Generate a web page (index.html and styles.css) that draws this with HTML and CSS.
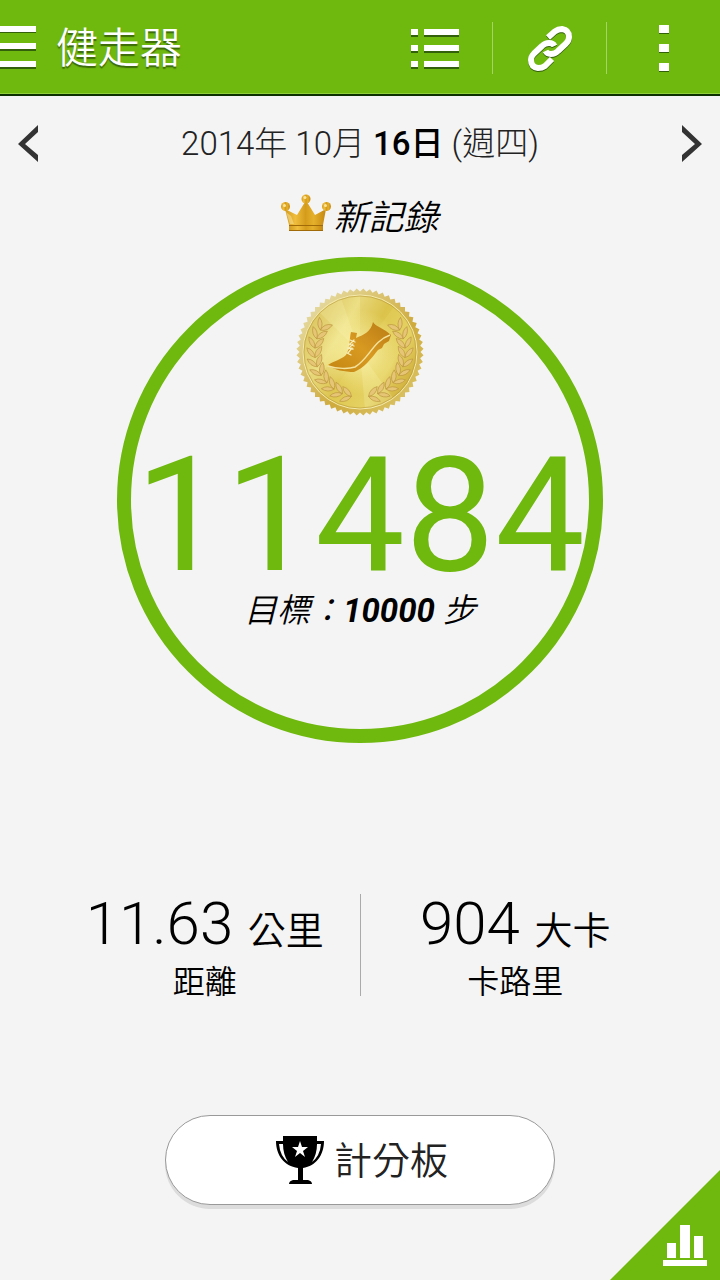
FILE: index.html
```html
<!DOCTYPE html>
<html lang="zh-Hant">
<head>
    <meta charset="UTF-8">
    <meta name="viewport" content="width=device-width, initial-scale=1.0">
    <title>健走器</title>
    <link rel="stylesheet" href="styles.css">
</head>
<body>
    <header class="navbar">
        <button class="menu-button" aria-label="選單">
            <svg width="36" height="44" viewBox="0 0 36 44">
                <path class="shade" d="M0 1h36v6H0zM0 19h36v6H0zM0 37h36v6H0z"/>
                <path d="M0 0h36v6H0zM0 17h36v6H0zM0 35h36v6H0z"/>
            </svg>
        </button>
        <h1 class="title">健走器</h1>
        <div class="actions">
            <button class="action" aria-label="記錄">
                <svg width="50" height="42" viewBox="0 0 50 42">
                    <path class="shade" d="M1 3h7v7H1zM14 3h35v7H14zM1 19h7v7H1zM14 19h35v7H14zM1 35h7v7H1zM14 35h35v7H14z"/>
                    <path d="M1 2h7v6H1zM14 2h35v6H14zM1 18h7v6H1zM14 18h35v6H14zM1 34h7v6H1zM14 34h35v6H14z"/>
                </svg>
            </button>
            <button class="action" aria-label="連結">
                <svg class="link-icon" width="46" height="48" viewBox="0 0 46 48">
                    <path d="M21 13.500L28 7.300Q31 5 35 5Q42 6 42 13Q42 16.500 39 19.500L31 27Q28 30 24 30Q20 30 18.500 27"/>
                    <path d="M25 35L18 42Q15 44 11 44Q4 43 4 36Q4 32.500 7 29.500L15 22Q18 19 22 19Q26 19 27.500 22"/>
                </svg>
            </button>
            <button class="action" aria-label="更多">
                <svg width="10" height="48" viewBox="0 0 10 48">
                    <path class="shade" d="M0 2h10v8H0zM0 21h10v8H0zM0 40h10v8H0z"/>
                    <path d="M0 1h10v8H0zM0 20h10v8H0zM0 39h10v8H0z"/>
                </svg>
            </button>
        </div>
    </header>

    <main class="content">
        <div class="date-bar">
            <button class="arrow" aria-label="前一天">
                <svg width="22" height="38" viewBox="0 0 22 38"><path d="M21 0v7L8 19l13 11v7L1 19z"/></svg>
            </button>
            <p class="date">2014年 10月 <strong>16日</strong> (週四)</p>
            <button class="arrow" aria-label="後一天">
                <svg width="22" height="38" viewBox="0 0 22 38"><path d="M1 0v7l13 12L1 30v7l20-18z"/></svg>
            </button>
        </div>

        <div class="record">
            <svg width="50" height="38" viewBox="0 0 50 38">
                <defs>
                    <linearGradient id="crownGold">
                        <stop offset="0" stop-color="#d09a20"/>
                        <stop offset="0.25" stop-color="#f0bd3c"/>
                        <stop offset="0.5" stop-color="#d59c1c"/>
                        <stop offset="0.7" stop-color="#e5b02b"/>
                        <stop offset="1" stop-color="#c4870f"/>
                    </linearGradient>
                </defs>
                <g fill="url(#crownGold)">
                    <path d="M4 15L16 21L24 8h2L34 21L45 15L42 31H8z"/>
                    <path d="M8 31h34v6H8z"/>
                    <circle cx="25" cy="5" r="4.500"/>
                    <circle cx="4.500" cy="12.500" r="4.500"/>
                    <circle cx="45.500" cy="12.500" r="4.500"/>
                </g>
                <path d="M8 31.500h34M8 36.500h34" stroke="#a06a08" stroke-width="1"/>
                <g fill="#fbe59b">
                    <circle cx="24" cy="3.500" r="1.500"/>
                    <circle cx="3.500" cy="11.500" r="1.500"/>
                    <circle cx="44.500" cy="11.500" r="1.500"/>
                    <path d="M5 18l5 4 3 8H9z" opacity=".5"/>
                </g>
            </svg>
            <span>新記錄</span>
        </div>

        <section class="ring">
            <svg class="medal" width="130" height="130" viewBox="10 12 130 130">
                <defs>
                    <linearGradient id="rim" x1="0" y1="0" x2="1" y2="1">
                        <stop offset="0" stop-color="#e9e4cb"/>
                        <stop offset="0.2" stop-color="#e2d390"/>
                        <stop offset="0.6" stop-color="#cfab3e"/>
                        <stop offset="0.85" stop-color="#d9c060"/>
                        <stop offset="1" stop-color="#f0e8c6"/>
                    </linearGradient>
                    <linearGradient id="face" x1="0" y1="0.2" x2="1" y2="0.8">
                        <stop offset="0" stop-color="#d9c15a"/>
                        <stop offset="0.3" stop-color="#ecdf85"/>
                        <stop offset="0.5" stop-color="#dfc851"/>
                        <stop offset="0.75" stop-color="#e5d264"/>
                        <stop offset="1" stop-color="#c9a42f"/>
                    </linearGradient>
                    <radialGradient id="glow">
                        <stop offset="0" stop-color="#fffbc0" stop-opacity=".8"/>
                        <stop offset="1" stop-color="#fff6a8" stop-opacity="0"/>
                    </radialGradient>
                    <linearGradient id="shoe" x1="0" y1="1" x2="1" y2="0">
                        <stop offset="0" stop-color="#c58612"/>
                        <stop offset="0.5" stop-color="#d99a22"/>
                        <stop offset="1" stop-color="#b97a14"/>
                    </linearGradient>
                    <rect id="tooth" x="30" y="32" width="90" height="90"/>
                    <clipPath id="edge">
                        <use href="#tooth"/>
                        <use href="#tooth" transform="rotate(6 75 77)"/>
                        <use href="#tooth" transform="rotate(12 75 77)"/>
                        <use href="#tooth" transform="rotate(18 75 77)"/>
                        <use href="#tooth" transform="rotate(24 75 77)"/>
                        <use href="#tooth" transform="rotate(30 75 77)"/>
                        <use href="#tooth" transform="rotate(36 75 77)"/>
                        <use href="#tooth" transform="rotate(42 75 77)"/>
                        <use href="#tooth" transform="rotate(48 75 77)"/>
                        <use href="#tooth" transform="rotate(54 75 77)"/>
                        <use href="#tooth" transform="rotate(60 75 77)"/>
                        <use href="#tooth" transform="rotate(66 75 77)"/>
                        <use href="#tooth" transform="rotate(72 75 77)"/>
                        <use href="#tooth" transform="rotate(78 75 77)"/>
                        <use href="#tooth" transform="rotate(84 75 77)"/>
                    </clipPath>
                    <g id="leaves">
                        <path d="M30 81Q23 79 22 71Q29 73 30 81z"/>
                        <path d="M30 81Q29 73 37 70Q37 78 30 81z"/>
                    </g>
                    <g id="branch">
                        <use href="#leaves" transform="rotate(34 75 77)"/>
                        <use href="#leaves" transform="rotate(22 75 77)"/>
                        <use href="#leaves" transform="rotate(10 75 77)"/>
                        <use href="#leaves" transform="rotate(-2 75 77)"/>
                        <use href="#leaves" transform="rotate(-14 75 77)"/>
                        <use href="#leaves" transform="rotate(-26 75 77)"/>
                        <use href="#leaves" transform="rotate(-38 75 77)"/>
                        <use href="#leaves" transform="rotate(-50 75 77)"/>
                        <use href="#leaves" transform="rotate(-62 75 77)"/>
                        <use href="#leaves" transform="rotate(-74 75 77)"/>
                    </g>
                </defs>
                <g clip-path="url(#edge)">
                    <rect x="10" y="12" width="130" height="130" fill="url(#rim)"/>
                </g>
                <circle cx="75" cy="77" r="57" fill="url(#face)"/>
                <path d="M75 77L34 37Q44 26 56 23zM75 77l5 57q16-1 28-11z" fill="#f9f3b4" opacity=".25"/>
                <path d="M75 77V20q20 0 34 12zM75 77l-52 24q7 15 20 24z" fill="#c9a52c" opacity=".15"/>
                <circle cx="75" cy="77" r="42" fill="url(#glow)"/>
                <circle cx="75" cy="77" r="57" fill="none" stroke="#f4eab0" stroke-width="1"/>
                <circle cx="75" cy="77" r="56" fill="none" stroke="#b99a38" stroke-width="1" opacity=".6"/>
                <g fill="#e6c676" stroke="#b8923a" stroke-width=".6">
                    <use href="#branch"/>
                    <use href="#branch" transform="translate(150 0) scale(-1 1)"/>
                </g>
                <path d="M43 90C48 86 56 85 61 80C65 74 64 65 66 57L72 58L71 63C78 60 86 57 88 47C91 52 99 53 106 60L104 66L99 69L97 73L93 75C86 84 79 93 69 97C60 97 49 95 43 90z" fill="url(#shoe)"/>
                <path d="M43 91C52 94 64 94 70 92C84 84 88 66 105 60" fill="none" stroke="#f2e29c" stroke-width="1.500"/>
                <path d="M65 65l5 2M64 69l5 2M63 73l5 1M62 78l4 2M69 65l-5 5M68 69l-5 5M67 73l-4 5" fill="none" stroke="#f7eeb8" stroke-width="1.300" stroke-linecap="round"/>
            </svg>
            <p class="steps">11484</p>
            <p class="goal">目標：<strong>10000</strong> 步</p>
        </section>

        <section class="stats">
            <div class="stat">
                <p class="value">11.63 <span class="unit">公里</span></p>
                <p class="label">距離</p>
            </div>
            <div class="stat">
                <p class="value">904 <span class="unit">大卡</span></p>
                <p class="label">卡路里</p>
            </div>
        </section>

        <button class="scoreboard">
            <svg width="48" height="50" viewBox="0 0 48 50">
                <path d="M7 1h34v5h7C48 20 40 31 27 33v12h5q4 1 4 4H13q0-3 4-4h5V33C8 31 0 20 0 6h7z"/>
                <path fill="#fff" d="M3 9h4q0 10 5 18Q4 21 3 9zM45 9h-4q0 10-5 18q8-6 9-18zM24 6l2 6h6l-5 4 2 6-5-4-5 4 2-6-5-4h6z"/>
            </svg>
            <span>計分板</span>
        </button>
    </main>

    <button class="chart-corner" aria-label="圖表">
        <svg width="110" height="110" viewBox="0 0 110 110">
            <path d="M110 0v110H0z" fill="#6fb80e"/>
            <path d="M57 73h9v15h-9zM70 55h10v33H70zM84 66h9v22h-9zM53 90h44v6H53z" fill="#fff"/>
        </svg>
    </button>
</body>
</html>
```

FILE: styles.css
```css
* {
    margin: 0;
    padding: 0;
    box-sizing: border-box;
}

body {
    font-family: Roboto, "Noto Sans CJK TC", sans-serif;
    font-weight: 350;
    color: #000;
    background: #f4f4f4;
    min-height: 100vh;
    display: flex;
    flex-direction: column;
}

button {
    border: none;
    background: transparent;
    font: inherit;
    cursor: pointer;
}

svg {
    display: block;
}

/* 標題列 */
.navbar {
    height: 96px;
    padding-top: 2px;
    display: flex;
    align-items: center;
    background: #6fb80e;
    border-bottom: 2px solid #0d3000;
    box-shadow: inset 0 -1px 0 #8fd03a;
    color: #fff;
}

.navbar svg {
    fill: #fff;
}

.navbar .shade {
    fill: #33600a;
}

.title {
    flex: 1;
    padding-top: 2px;
    padding-left: 20px;
    font-size: 42px;
    line-height: 60px;
    font-weight: 350;
    text-shadow: 0 2px 1px #3c6a08;
}

.actions {
    display: flex;
    align-items: center;
}

.action {
    width: 114px;
    height: 52px;
    display: flex;
    align-items: center;
    justify-content: center;
}

.action + .action {
    border-left: 1px solid #a5d565;
}

.navbar .link-icon {
    fill: none;
    stroke: #fff;
    stroke-width: 6;
    filter: drop-shadow(0 1px 0 #33600a);
}

/* 日期 */
.content {
    flex: 1;
    display: flex;
    flex-direction: column;
    align-items: center;
}

.date-bar {
    align-self: stretch;
    height: 96px;
    padding: 0 17px;
    display: flex;
    align-items: center;
    justify-content: space-between;
}

.arrow {
    fill: #333;
}

.date {
    padding-bottom: 6px;
    font-size: 33px;
    font-weight: 300;
    color: #222;
}

.date strong {
    font-weight: 500;
    color: #000;
}

.record {
    padding-top: 2px;
    display: flex;
    align-items: flex-start;
    gap: 2px;
    font-size: 35px;
    font-style: italic;
    line-height: 50px;
}

/* 步數圓環 */
.ring {
    width: 486px;
    height: 486px;
    margin-top: 13px;
    padding-top: 16px;
    border: 14px solid #6fb80e;
    border-radius: 50%;
    display: flex;
    flex-direction: column;
    align-items: center;
}

.steps {
    margin-top: 24px;
    font-size: 160px;
    line-height: 150px;
    font-weight: 400;
    color: #6fb80e;
}

.goal {
    font-size: 33px;
    line-height: 40px;
    font-style: italic;
}

.goal strong {
    font-weight: 700;
}

/* 距離與卡路里 */
.stats {
    width: 620px;
    max-width: 100%;
    margin-top: 151px;
    display: flex;
}

.stat {
    flex: 1;
    height: 102px;
    text-align: center;
}

.stat + .stat {
    border-left: 1px solid #aaa;
}

.value {
    font-size: 60px;
    line-height: 60px;
}

.unit {
    font-size: 38px;
}

.label {
    font-size: 32px;
    line-height: 42px;
}

/* 計分板 */
.scoreboard {
    width: 390px;
    height: 90px;
    margin-top: 119px;
    margin-bottom: 75px;
    padding-left: 4px;
    display: flex;
    align-items: center;
    justify-content: center;
    gap: 10px;
    border: 1px solid #999;
    border-radius: 45px;
    background: #fff;
    box-shadow: 0 4px 0 #dcdcdc;
    font-size: 38px;
    color: #222;
}

.scoreboard span {
    padding-bottom: 6px;
}

.scoreboard svg {
    fill: #000;
}

.chart-corner {
    position: fixed;
    right: 0;
    bottom: 0;
}
```
